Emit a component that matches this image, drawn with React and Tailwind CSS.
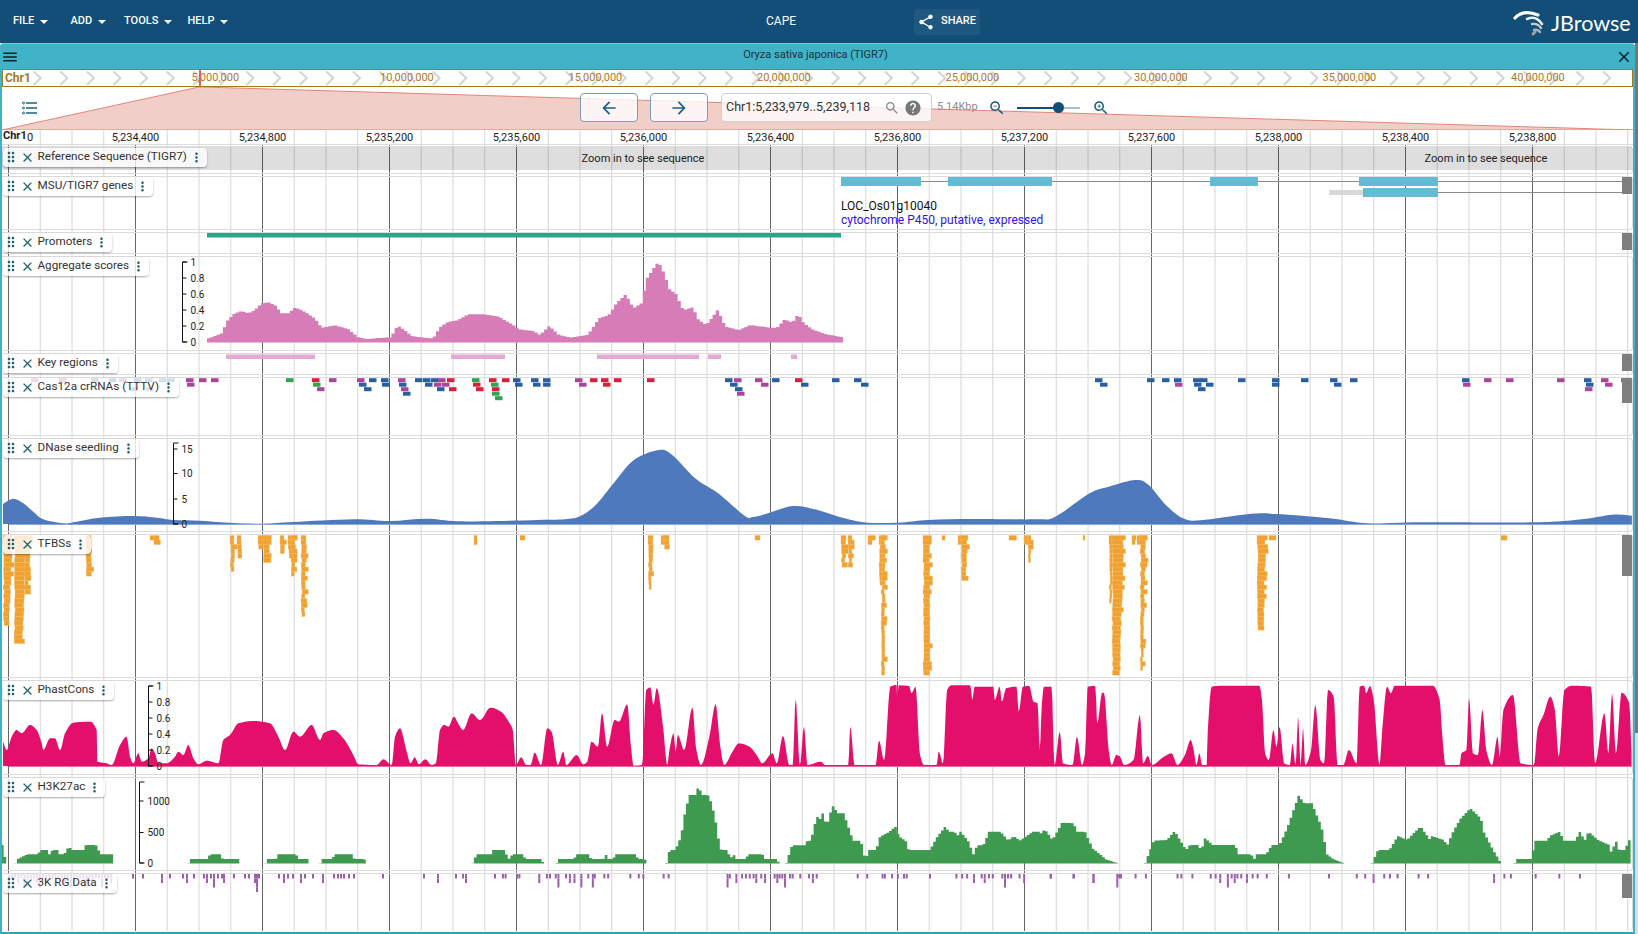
import React from "react";

const ICONS = {
  share: "M18 16.08c-.76 0-1.44.3-1.96.77L8.91 12.7c.05-.23.09-.46.09-.7s-.04-.47-.09-.7l7.05-4.11c.54.5 1.25.81 2.04.81 1.66 0 3-1.34 3-3s-1.34-3-3-3-3 1.34-3 3c0 .24.04.47.09.7L8.04 9.81C7.5 9.31 6.79 9 6 9c-1.66 0-3 1.34-3 3s1.34 3 3 3c.79 0 1.5-.31 2.04-.81l7.12 4.16c-.05.21-.08.43-.08.65 0 1.61 1.31 2.92 2.92 2.92 1.61 0 2.92-1.31 2.92-2.92s-1.31-2.92-2.92-2.92z",
  back: "M20 11H7.83l5.59-5.59L12 4l-8 8 8 8 1.41-1.41L7.83 13H20v-2z",
  forward: "M12 4l-1.41 1.41L16.17 11H4v2h12.17l-5.58 5.59L12 20l8-8z",
  close: "M19 6.41 17.59 5 12 10.59 6.41 5 5 6.41 10.59 12 5 17.59 6.41 19 12 13.41 17.59 19 19 17.59 13.41 12z",
  menu: "M3 18h18v-2H3v2zm0-5h18v-2H3v2zm0-7v2h18V6H3z",
  search: "M15.5 14h-.79l-.28-.27C15.41 12.59 16 11.11 16 9.5 16 5.91 13.09 3 9.5 3S3 5.91 3 9.5 5.91 16 9.5 16c1.61 0 3.09-.59 4.23-1.57l.27.28v.79l5 4.99L20.49 19l-4.99-5zm-6 0C7.01 14 5 11.99 5 9.5S7.01 5 9.5 5 14 7.01 14 9.5 11.99 14 9.5 14z",
  zoomOut: "M15.5 14h-.79l-.28-.27C15.41 12.59 16 11.11 16 9.5 16 5.91 13.09 3 9.5 3S3 5.91 3 9.5 5.91 16 9.5 16c1.61 0 3.09-.59 4.23-1.57l.27.28v.79l5 4.99L20.49 19l-4.99-5zm-6 0C7.01 14 5 11.99 5 9.5S7.01 5 9.5 5 14 7.01 14 9.5 11.99 14 9.5 14zM7 9h5v1H7z",
  zoomIn: "M15.5 14h-.79l-.28-.27C15.41 12.59 16 11.11 16 9.5 16 5.91 13.09 3 9.5 3S3 5.91 3 9.5 5.91 16 9.5 16c1.61 0 3.09-.59 4.23-1.57l.27.28v.79l5 4.99L20.49 19l-4.99-5zm-6 0C7.01 14 5 11.99 5 9.5S7.01 5 9.5 5 14 7.01 14 9.5 11.99 14 9.5 14zm2.5-4h-2v2H9v-2H7V9h2V7h1v2h2v1z",
  help: "M12 2C6.48 2 2 6.48 2 12s4.48 10 10 10 10-4.48 10-10S17.52 2 12 2zm1 17h-2v-2h2v2zm2.07-7.75-.9.92C13.45 12.9 13 13.5 13 15h-2v-.5c0-1.1.45-2.1 1.17-2.83l1.24-1.26c.37-.36.59-.86.59-1.41 0-1.1-.9-2-2-2s-2 .9-2 2H8c0-2.21 1.79-4 4-4s4 1.79 4 4c0 .88-.36 1.68-.93 2.25z",
  more: "M12 8c1.1 0 2-.9 2-2s-.9-2-2-2-2 .9-2 2 .9 2 2 2zm0 2c-1.1 0-2 .9-2 2s.9 2 2 2 2-.9 2-2-.9-2-2-2zm0 6c-1.1 0-2 .9-2 2s.9 2 2 2 2-.9 2-2-.9-2-2-2z",
  drag: "M11 18c0 1.1-.9 2-2 2s-2-.9-2-2 .9-2 2-2 2 .9 2 2zm-2-8c-1.1 0-2 .9-2 2s.9 2 2 2 2-.9 2-2-.9-2-2-2zm0-6c-1.1 0-2 .9-2 2s.9 2 2 2 2-.9 2-2-.9-2-2-2zm6 4c1.1 0 2-.9 2-2s-.9-2-2-2-2 .9-2 2 .9 2 2 2zm0 2c-1.1 0-2 .9-2 2s.9 2 2 2 2-.9 2-2-.9-2-2-2zm0 6c-1.1 0-2 .9-2 2s.9 2 2 2 2-.9 2-2-.9-2-2-2z",
};

function Icon({ name, className }) {
  return (
    <svg viewBox="0 0 24 24" className={className} fill="currentColor">
      <path d={ICONS[name]} />
    </svg>
  );
}

// converts points read off the zoomed crops into page coordinates
const crop = (ox, oy, sx) => (pts) => pts.map(([x, y]) => [ox + x / sx, oy + y / 3]);
const z1 = crop(0, 250, 3);
const z7 = crop(500, 250, 2.613);
const z8 = crop(1040, 370, 2.622);
const z6 = crop(0, 720, 3);
const z9 = crop(400, 530, 2.376);
const z10 = crop(1040, 670, 2.622);
const z11 = crop(500, 770, 2.613);

const area = (pts, base) =>
  `M${pts[0][0].toFixed(1)} ${base}` +
  pts.map((p) => `L${p[0].toFixed(1)} ${p[1].toFixed(1)}`).join("") +
  `L${pts[pts.length - 1][0].toFixed(1)} ${base}Z`;

const smoothArea = (pts, base) => {
  let d = `M${pts[0][0].toFixed(1)} ${base}L${pts[0][0].toFixed(1)} ${pts[0][1].toFixed(1)}`;
  for (let i = 0; i < pts.length - 1; i++) {
    const p0 = pts[Math.max(i - 1, 0)];
    const p1 = pts[i];
    const p2 = pts[i + 1];
    const p3 = pts[Math.min(i + 2, pts.length - 1)];
    d += `C${(p1[0] + (p2[0] - p0[0]) / 6).toFixed(1)} ${(p1[1] + (p2[1] - p0[1]) / 6).toFixed(1)} ${(p2[0] - (p3[0] - p1[0]) / 6).toFixed(1)} ${(p2[1] - (p3[1] - p1[1]) / 6).toFixed(1)} ${p2[0].toFixed(1)} ${p2[1].toFixed(1)}`;
  }
  return d + `L${pts[pts.length - 1][0].toFixed(1)} ${base}Z`;
};

const stepped = (pts, bin) => {
  const out = [];
  let j = 0;
  for (let x = pts[0][0]; x < pts[pts.length - 1][0]; x += bin) {
    while (j < pts.length - 2 && pts[j + 1][0] < x) j++;
    const t = (x - pts[j][0]) / (pts[j + 1][0] - pts[j][0] || 1);
    const y = pts[j][1] + (pts[j + 1][1] - pts[j][1]) * t;
    out.push([x, y], [x + bin, y]);
  }
  return out;
};

// monotone cubic through the points, so peaks come out as round domes with no overshoot
const domes = (raw, step) => {
  const pts = raw.filter((p, i) => i === 0 || p[0] > raw[i - 1][0]);
  const n = pts.length;
  const d = [];
  for (let i = 0; i < n - 1; i++) d.push((pts[i + 1][1] - pts[i][1]) / (pts[i + 1][0] - pts[i][0]));
  const m = pts.map((_, i) => {
    if (i === 0) return d[0];
    if (i === n - 1) return d[n - 2];
    return d[i - 1] * d[i] <= 0 ? 0 : (2 * d[i - 1] * d[i]) / (d[i - 1] + d[i]);
  });
  const out = [];
  for (let i = 0; i < n - 1; i++) {
    const h = pts[i + 1][0] - pts[i][0];
    for (let x = pts[i][0]; x < pts[i + 1][0]; x += step) {
      const t = (x - pts[i][0]) / h;
      const t2 = t * t;
      const t3 = t2 * t;
      out.push([
        x,
        (2 * t3 - 3 * t2 + 1) * pts[i][1] + (t3 - 2 * t2 + t) * h * m[i] + (-2 * t3 + 3 * t2) * pts[i + 1][1] + (t3 - t2) * h * m[i + 1],
      ]);
    }
  }
  return out;
};

const AGGREGATE = stepped(
  [
    ...z1([[621, 265], [640, 258], [660, 250], [680, 208], [700, 190], [720, 183], [740, 190], [760, 180], [780, 160], [800, 157], [820, 165], [840, 190], [860, 190], [880, 173], [900, 180], [920, 192], [940, 205], [960, 233], [1000, 226], [1040, 237], [1070, 262], [1100, 267], [1130, 264], [1170, 262], [1180, 235], [1195, 230], [1215, 245], [1230, 258], [1270, 263], [1295, 265], [1315, 232], [1340, 215], [1365, 212], [1400, 193], [1450, 193], [1490, 200]]),
    ...z7([[0, 205], [30, 225], [45, 238], [85, 243], [100, 255], [125, 228], [150, 255], [180, 263], [225, 255], [255, 205], [280, 195], [300, 160], [325, 133], [345, 175], [365, 160], [380, 85], [400, 50], [410, 35], [425, 70], [440, 120], [455, 130], [475, 180], [500, 172], [515, 210], [535, 225], [565, 180], [585, 230], [620, 240], [650, 225], [700, 233], [720, 233], [740, 208], [760, 218], [775, 192], [790, 220], [815, 240], [850, 253], [893, 262]]),
  ],
  3.18
);

const DNASE = [
  ...z1([[9, 762], [40, 746], [70, 760], [100, 785], [130, 808], [190, 820], [230, 815], [300, 803], [400, 798], [470, 803], [520, 810], [600, 812], [700, 819], [790, 821], [880, 816], [1060, 808], [1170, 813], [1280, 806], [1370, 814], [1490, 813]]),
  ...z7([[100, 810], [170, 808], [210, 798], [250, 765], [300, 695], [350, 630], [415, 600], [450, 615], [510, 685], [570, 730], [640, 798], [660, 801], [700, 790], [765, 768], [830, 780], [900, 805], [960, 818], [1040, 818], [1120, 810], [1240, 807], [1400, 808]]),
  ...z8([[40, 440], [130, 370], [180, 350], [250, 330], [285, 345], [330, 405], [375, 445], [420, 451], [550, 432], [620, 432], [760, 445], [860, 460], [1000, 457], [1300, 457], [1420, 448], [1500, 434], [1552, 437]]),
];

const PHAST = domes(
  [
    ...z6([[9, 65], [20, 90], [35, 50], [50, 30], [65, 40], [90, 15], [110, 30], [125, 70], [130, 90], [150, 55], [165, 55], [180, 90], [195, 40], [220, 8], [270, 5], [290, 30], [292, 125], [320, 130], [335, 135], [360, 75], [380, 50], [390, 110], [400, 130], [415, 100], [425, 125], [445, 115], [455, 85], [465, 100], [475, 130], [500, 130], [525, 110], [535, 95], [550, 105], [565, 75], [580, 115], [595, 133], [620, 122], [655, 130], [670, 60], [690, 45], [715, 10], [760, 3], [810, 10], [835, 50], [855, 90], [880, 35], [900, 50], [935, 15], [960, 60], [970, 40], [1000, 30], [1030, 55], [1060, 105], [1075, 133], [1130, 135], [1150, 118], [1175, 135], [1185, 50]]),
    ...z9([[0, 595], [15, 660], [25, 700], [35, 682], [45, 703], [60, 688], [75, 705], [85, 700], [95, 600], [105, 585], [115, 590], [128, 560], [140, 585], [150, 600], [170, 550], [190, 570], [215, 533], [240, 545], [258, 575], [268, 600], [275, 705], [288, 682], [300, 705], [310, 705], [320, 668], [335, 705], [350, 595], [360, 605], [375, 705], [388, 665], [395, 705], [420, 675], [435, 703], [445, 695], [455, 635], [470, 650], [480, 550], [492, 650], [510, 570], [520, 575], [540, 523], [548, 640], [555, 707], [575, 705], [585, 480], [595, 472], [602, 525], [610, 474], [625, 590], [635, 705], [640, 660], [650, 610], [655, 665], [660, 615], [675, 660], [695, 533], [703, 650], [715, 705], [735, 620], [750, 523], [760, 640], [770, 705], [790, 665], [805, 640], [830, 650], [850, 680], [860, 700], [885, 670], [895, 700], [910, 618], [925, 705], [933, 705], [940, 508], [950, 705], [960, 590], [968, 705], [1000, 695], [1010, 705], [1040, 705], [1065, 705], [1070, 590], [1080, 705], [1130, 705], [1138, 632], [1150, 690], [1165, 470], [1180, 465], [1181, 505], [1185, 466], [1210, 468], [1215, 490], [1225, 470], [1235, 670], [1245, 705], [1275, 705], [1280, 665], [1290, 700], [1300, 480], [1310, 466], [1355, 466], [1360, 510], [1365, 470], [1410, 470], [1413, 510], [1425, 470], [1430, 515], [1440, 475], [1465, 470], [1470, 545], [1480, 470], [1495, 468], [1505, 515], [1515, 520], [1520, 660], [1525, 525], [1530, 470], [1548, 470], [1555, 705]]),
    ...z10([[52, 185], [60, 280], [85, 285], [97, 200], [110, 285], [118, 250], [125, 50], [145, 48], [150, 160], [163, 68], [168, 70], [180, 240], [188, 285], [200, 255], [210, 260], [220, 285], [245, 270], [262, 135], [270, 280], [283, 258], [293, 285], [325, 260], [345, 250], [360, 285], [380, 255], [395, 210], [403, 240], [410, 285], [418, 250], [425, 285], [437, 285], [440, 180], [450, 50], [480, 47], [575, 47], [582, 90], [590, 250], [600, 270], [612, 180], [620, 230], [628, 170], [640, 280], [655, 285], [662, 220], [670, 285], [677, 140], [683, 285], [690, 175], [695, 285], [710, 245], [722, 105], [735, 270], [745, 280], [755, 60], [770, 80], [780, 285], [795, 285], [810, 240], [830, 280], [838, 50], [850, 47], [855, 70], [865, 48], [875, 90], [890, 285], [898, 170], [910, 50], [920, 70], [930, 47], [1030, 47], [1048, 90], [1055, 200], [1063, 285], [1100, 285], [1105, 250], [1118, 240], [1125, 85], [1135, 250], [1148, 255], [1160, 120], [1170, 240], [1185, 285], [1200, 200], [1205, 260], [1215, 120], [1240, 75], [1260, 280], [1295, 285], [1305, 175], [1320, 135], [1338, 80], [1350, 120], [1360, 260], [1375, 60], [1395, 47], [1445, 50], [1455, 280], [1480, 130], [1490, 250], [1500, 70], [1510, 250], [1525, 68], [1545, 100], [1552, 285]]),
  ],
  0.75
);

const H3K = [
  z6([[9, 375], [15, 405], [22, 430]]),
  z6([[49, 430], [55, 417], [85, 403], [115, 403], [125, 390], [145, 390], [150, 403], [160, 390], [175, 390], [180, 403], [195, 403], [210, 377], [215, 390], [252, 390], [260, 375], [290, 375], [305, 403], [340, 403], [345, 430]]),
  z6([[568, 430], [575, 417], [625, 417], [632, 403], [663, 403], [670, 417], [718, 417], [723, 430]]),
  z6([[799, 430], [805, 417], [830, 417], [835, 403], [890, 403], [900, 417], [925, 417], [930, 430]]),
  z6([[963, 430], [970, 417], [1000, 417], [1005, 403], [1058, 403], [1065, 417], [1095, 417], [1101, 430]]),
  [
    ...z6([[1420, 430], [1432, 403], [1475, 403], [1480, 390], [1500, 390]]),
    ...z11([[12, 240], [25, 267], [35, 253], [62, 253], [68, 267], [110, 267], [115, 279]]),
  ],
  z11([[150, 279], [155, 267], [195, 267], [203, 253], [232, 253], [240, 267], [272, 267], [278, 253], [285, 267], [298, 267], [303, 253], [358, 253], [362, 267], [380, 267], [385, 279]]),
  z11([[437, 279], [445, 240], [460, 240], [475, 200], [485, 130], [497, 75], [515, 75], [520, 47], [530, 75], [545, 75], [555, 100], [565, 150], [575, 220], [580, 240], [595, 240], [605, 265], [612, 253], [620, 267], [645, 267], [650, 253], [688, 253], [693, 267], [725, 267], [731, 279]]),
  [
    ...z11([[750, 279], [765, 226], [800, 226], [805, 212], [815, 212], [822, 170], [835, 130], [840, 155], [845, 130], [852, 155], [860, 155], [870, 105], [885, 130], [900, 130], [915, 180], [925, 212], [945, 212], [957, 272], [965, 240], [985, 240], [995, 200], [1020, 185], [1035, 170], [1045, 200], [1062, 212], [1070, 240], [1085, 240], [1125, 240], [1145, 200], [1165, 170], [1175, 185], [1190, 185], [1197, 198], [1205, 185], [1225, 212], [1240, 255], [1248, 226], [1265, 226], [1280, 185], [1310, 185], [1330, 212], [1345, 198], [1360, 212], [1395, 185], [1410, 185]]),
    ...z10([[0, 495], [15, 478], [35, 510], [60, 458], [90, 460], [100, 485], [120, 485], [140, 535], [175, 568], [205, 579]]),
  ],
  z10([[278, 579], [300, 512], [335, 510], [355, 483], [385, 540], [395, 525], [415, 525], [425, 540], [435, 505], [455, 525], [515, 525], [520, 553], [555, 553], [565, 567], [570, 553], [595, 553], [610, 525], [630, 525], [650, 475], [680, 377], [695, 400], [715, 400], [740, 470], [755, 553], [770, 567], [798, 579]]),
  z10([[873, 579], [888, 540], [918, 540], [940, 498], [965, 510], [985, 485], [1000, 470], [1025, 510], [1030, 498], [1060, 510], [1070, 525], [1085, 485], [1105, 445], [1130, 415], [1158, 445], [1165, 485], [1190, 540], [1210, 579]]),
  z10([[1247, 579], [1250, 567], [1290, 567], [1300, 512], [1330, 512], [1340, 497], [1365, 485], [1375, 512], [1405, 512], [1418, 485], [1430, 512], [1440, 485], [1465, 510], [1495, 525], [1500, 548], [1512, 512], [1520, 540], [1535, 540], [1552, 498], [1552, 579]]),
].map((seg) => stepped(seg, 2.6).map(([x, y]) => [x - 2, y]));

const B = "#2a5f9e";
const P = "#a9459b";
const R = "#d4213d";
const G = "#33a24f";
const CRRNA = [
  [31, 0, P], [59, 0, P], [91, 0, B], [109, 0, B], [119, 0, P], [134, 0, B], [145, 0, B], [159, 0, B], [167, 0, B], [130, 2, B], [146, 2, P],
  [186, 0, P], [187, 1, P], [199, 0, P], [211, 0, P], [286, 0, G], [312, 0, R], [313, 1, G], [317, 2, P], [329, 0, P], [357, 0, P], [359, 1, B], [364, 2, B], [369, 0, B], [381, 0, B], [382, 1, B], [398, 0, P], [399, 1, B], [401, 2, P], [403, 3, B], [415, 0, B], [423, 0, B], [431, 0, B], [425, 1, B], [434, 1, P], [438, 0, P], [442, 1, P], [437, 2, B], [447, 0, R], [449, 2, R], [472, 0, G], [473, 1, R], [476, 2, R], [489, 0, R], [491, 1, G], [492, 2, R], [492, 3, G], [495, 4, G],
  [502, 0, R], [513, 0, B], [515, 1, B], [531, 0, B], [533, 1, B], [543, 0, B], [543, 1, B], [575, 0, P], [579, 1, P], [590, 0, R], [601, 0, R], [603, 1, R], [614, 0, R], [647, 0, R], [725, 0, B], [730, 1, B], [734, 0, P], [735, 2, B], [737, 3, P], [755, 0, P], [761, 1, P], [772, 0, B], [795, 0, R], [801, 1, B], [832, 0, B], [854, 0, B], [861, 1, B],
  [1095, 0, B], [1100, 1, B], [1147, 0, B], [1162, 0, B], [1174, 0, B], [1175, 1, P], [1193, 0, B], [1194, 1, B], [1200, 0, B], [1206, 1, B], [1198, 2, B], [1238, 0, B], [1272, 0, B], [1272, 1, B], [1301, 0, B], [1330, 0, B], [1334, 1, B], [1350, 0, B], [1462, 0, B], [1463, 1, P], [1484, 0, P], [1506, 0, P], [1557, 0, P], [1584, 0, B], [1586, 1, B], [1585, 2, P], [1601, 0, P], [1605, 1, P], [1621, 0, P],
];

// repeatable jitter so the stacks look the same on every render
let seed = 7;
const rnd = () => {
  seed = (seed * 16807) % 2147483647;
  return seed / 2147483647;
};

// [left, width at top, width at bottom, rows]
const TFBS_STACKS = [
  [3, 9, 5, 20], [14, 11, 8, 24], [24, 6, 3, 13], [86, 5, 5, 9], [150, 4, 3, 1], [154, 5, 4, 2],
  [230, 4, 3, 8], [237, 4, 4, 5], [258, 9, 5, 3], [263, 6, 5, 6], [267, 4, 4, 2], [280, 4, 4, 4], [288, 6, 4, 5], [291, 4, 3, 9], [301, 5, 3, 18],
  [474, 3, 3, 2], [520, 5, 5, 1], [648, 5, 2, 12], [661, 5, 3, 2], [664, 5, 5, 3], [755, 5, 5, 1],
  [841, 5, 3, 7], [848, 4, 2, 7], [868, 5, 4, 2], [879, 6, 3, 11], [881, 3, 3, 31], [923, 6, 6, 31], [942, 3, 3, 1], [958, 6, 5, 2], [966, 2, 2, 1], [961, 6, 4, 10], [1009, 5, 5, 1], [1024, 5, 4, 2], [1028, 3, 2, 6],
  [1083, 2, 2, 1], [1109, 3, 2, 15], [1112, 11, 7, 31], [1132, 4, 3, 2], [1137, 7, 6, 2], [1140, 5, 2, 30], [1257, 8, 6, 21], [1269, 7, 7, 1], [1501, 6, 6, 1],
];
const TFBS = TFBS_STACKS.flatMap(([x, top, bottom, rows]) =>
  Array.from({ length: rows }, (_, r) => {
    const w = top + ((bottom - top) * r) / Math.max(rows - 1, 1);
    return { x: x + rnd() * 1.2 * (r > 1 ? 1 : 0), y: 535.5 + r * 4.5, w: w + (rnd() < 0.25 ? 2.5 : 0) };
  })
);

// [x, stack height]
const RG_BARS = [
  ...[[132, 1], [142, 1], [161, 2], [169, 1], [182, 1], [186, 2], [193, 1], [203, 1], [206, 2], [210, 1], [213, 3], [217, 1], [221, 1], [223, 2], [233, 1], [244, 1], [248, 1], [254, 2], [256, 4], [258, 1], [278, 1], [283, 2], [287, 1], [292, 1], [300, 2], [304, 1], [312, 1], [322, 2], [333, 1], [337, 1], [340, 1], [343, 1], [348, 1], [353, 1], [382, 1], [423, 1], [437, 2], [455, 1], [462, 1], [465, 2], [494, 1]],
  ...[5, 12, 42, 48, 120, 128, 143, 170, 228, 245, 270, 280, 338, 360, 372, 425, 438, 598, 630, 640, 650, 660, 680, 715, 728, 735, 755, 762, 782, 805, 825, 932, 957, 997, 1003, 1022, 1037, 1053, 1060, 1121, 1190, 1205, 1218, 1256, 1275, 1285, 1310, 1325, 1333, 1355, 1437, 1497].map((x) => [500 + x / 2.613, 1]),
  ...[[100, 2], [150, 3], [180, 2], [192, 2], [210, 3], [240, 3], [592, 3], [615, 2], [667, 2], [690, 2], [722, 2], [742, 3], [815, 2], [1236, 2], [1264, 2], [1317, 3], [1367, 2], [1548, 2]].map(([x, n]) => [500 + x / 2.613, n]),
  ...[25, 85, 248, 275, 358, 368, 397, 445, 458, 500, 515, 525, 555, 568, 592, 650, 755, 828, 850, 900, 915, 935, 990, 1015, 1215, 1232, 1297, 1359, 1413].map((x) => [1040 + x / 2.622, 1]),
  ...[[138, 2], [200, 3], [470, 2], [490, 3], [508, 2], [540, 2], [872, 2], [1188, 2], [205, 1], [210, 1]].map(([x, n]) => [1040 + x / 2.622, n]),
  ...Array.from({ length: 34 }, (_, i) => [8 + i * 3.1, i % 5 === 0 ? 3 : i % 3 === 0 ? 2 : 1]),
];

const MAJORS = Array.from({ length: 13 }, (_, i) => 8.5 + 127 * i);
const MINORS = Array.from({ length: 52 }, (_, i) => 8.5 + 31.75 * i).filter((_, i) => i % 4 !== 0);
const SCALE_LABELS = ["", "5,234,400", "5,234,800", "5,235,200", "5,235,600", "5,236,000", "5,236,400", "5,236,800", "5,237,200", "5,237,600", "5,238,000", "5,238,400", "5,238,800"];
const OVERVIEW_LABELS = ["5,000,000", "10,000,000", "15,000,000", "20,000,000", "25,000,000", "30,000,000", "35,000,000", "40,000,000"];

function Axis({ x, top, bottom, ticks }) {
  return (
    <g>
      <path d={`M${x + 5} ${top}H${x}V${bottom}H${x + 5}`} fill="none" stroke="#111" strokeWidth="1" />
      {ticks.map(([label, y]) => (
        <g key={label}>
          <path d={`M${x} ${y}h4`} stroke="#111" strokeWidth="1" />
          <text x={x + 8} y={y + 3.5} fontSize="10" fill="#222">
            {label}
          </text>
        </g>
      ))}
    </g>
  );
}

function TrackLabel({ name, className = "top-0" }) {
  return (
    <div className={`absolute left-[1px] flex h-[19px] items-center rounded-[4px] bg-white/80 pb-[1px] text-[11.7px] whitespace-nowrap text-[#333] shadow-[0_1px_2px_rgba(0,0,0,0.35)] ${className}`}>
      <Icon name="drag" className="h-[16px] w-[16px] text-[#1f5f70]" />
      <Icon name="close" className="ml-[1px] h-[15px] w-[15px] text-[#1f5f70]" />
      <span className="ml-[2.5px]">{name}</span>
      <Icon name="more" className="mr-[3px] ml-[2px] h-[15px] w-[15px] text-[#1f5f70]" />
    </div>
  );
}

function Track({ name, top, h, className, labelClass, thumbClass, children }) {
  return (
    <div className={`relative mb-[2px] rounded-r-[4px] border-y border-r border-[#dcdcdc] ${className}`}>
      <svg className="block h-full w-[1630px]" viewBox={`2 ${top + 1} 1630 ${h - 2}`}>
        {children}
      </svg>
      <TrackLabel name={name} className={labelClass} />
      {thumbClass && <div className={`absolute top-0 right-0 w-[10px] bg-[#7f7f7f] ${thumbClass}`} />}
    </div>
  );
}

function MenuItem({ label, className }) {
  return (
    <div className={`flex items-center gap-[6px] ${className}`}>
      {label}
      <span className="mt-[1px] border-x-[4px] border-t-[4px] border-x-transparent border-t-white" />
    </div>
  );
}

export default function App() {
  return (
    <div className="flex h-[934px] w-[1638px] flex-col overflow-hidden bg-white font-['Roboto',sans-serif]">
      {/* app bar */}
      <header className="flex h-[43px] items-center bg-[#124e78] text-[11px] font-medium text-white">
        <nav className="flex w-[766px] pl-[13px]">
          <MenuItem label="FILE" className="w-[57.5px]" />
          <MenuItem label="ADD" className="w-[53.5px]" />
          <MenuItem label="TOOLS" className="w-[63.5px]" />
          <MenuItem label="HELP" />
        </nav>
        <div className="-mt-[1px] w-[148px] text-[12px] font-normal">CAPE</div>
        <div className="flex h-[26px] w-[66px] items-center gap-[6px] rounded-[4px] bg-white/5 pl-[3px]">
          <Icon name="share" className="h-[18px] w-[18px]" />
          SHARE
        </div>
        <div className="relative ml-auto h-[43px] w-[130px]">
          <svg className="absolute top-0 left-0 h-[43px] w-[50px]" viewBox="1508 0 50 43" fill="none" strokeLinecap="round">
            <path d="M1515 18Q1523 9 1538 15" stroke="#fff" strokeWidth="3.2" />
            <path d="M1527 19Q1536 15 1542 24" stroke="#eef0f2" strokeWidth="2.6" />
            <path d="M1532 24Q1538 23 1541 28" stroke="#c4cad0" strokeWidth="2.4" />
            <path d="M1534 30Q1538 29 1540 32" stroke="#aab2ba" strokeWidth="2.4" />
            <path d="M1533 34L1535 32" stroke="#9aa2aa" strokeWidth="3" />
          </svg>
          <span className="absolute top-[7px] left-[43px] font-['Lato',sans-serif] text-[21.5px] font-normal text-white">JBrowse</span>
        </div>
      </header>

      <div className="flex flex-1">
        <main className="relative flex w-[1635px] flex-col rounded-t-[4px] border-x-2 border-b-2 border-[#3fb1c8] border-b-[#3a9fb3]">
          {/* view title */}
          <div className="-mx-[2px] flex h-[26px] items-center rounded-t-[4px] border-t border-[#9fb8c4] bg-[#41b3c9] pr-[2px] pl-[1px] text-[#1d2f3a]">
            <Icon name="menu" className="h-[18px] w-[18px] text-[#10202a]" />
            <div className="-mt-[2px] flex-1 pr-[3px] text-center text-[11px]">Oryza sativa japonica (TIGR7)</div>
            <Icon name="close" className="h-[18px] w-[18px] text-[#10202a]" />
          </div>

          {/* chromosome overview */}
          <div className="relative h-[18px] border border-[#a6761f] bg-white">
            <svg className="block h-[16px] w-[1629px]" viewBox="3 70 1629 16" fill="none">
              {Array.from({ length: 60 }, (_, i) => (
                <path key={i} d={`M${33.7 + i * 26.6} 71.5l7 6.5-7 7`} stroke="#d4d4d4" strokeWidth="2" />
              ))}
              <text x="5" y="81.5" fontSize="12" fontWeight="700" fill="#a6761f">Chr1</text>
              {OVERVIEW_LABELS.map((label, i) => (
                <text key={label} x={191.5 + 188.5 * i} y="80.5" fontSize="11" fill="#ab7a2a">
                  {label}
                </text>
              ))}
            </svg>
            <div className="absolute top-0 left-[196px] h-[17px] w-[2px] bg-[#d9655b]" />
          </div>

          {/* controls, over the zoom polygon */}
          <div className="relative flex h-[43px] items-center pb-[2px]">
            <svg className="absolute top-0 left-0 h-[43px] w-[1631px]" viewBox="2 87 1631 43">
              <path d="M2 130L199 87H201L1633 130Z" fill="#f2cec9" stroke="#e0877b" strokeWidth="1" />
            </svg>
            <svg className="relative ml-[19px] h-[18px] w-[18px] text-[#1f5f7a]" viewBox="0 0 18 18" fill="none" stroke="currentColor">
              <circle cx="2.5" cy="4" r="1" />
              <circle cx="2.5" cy="9" r="1" />
              <circle cx="2.5" cy="14" r="1" />
              <path d="M5 4h11M5 9h11M5 14h11" strokeWidth="1.5" />
            </svg>
            <button className="relative ml-[541px] flex h-[29px] w-[58px] items-center justify-center rounded-[4px] border border-[#7c9db8] bg-white/80 text-[#1f5f8a]">
              <Icon name="back" className="h-[20px] w-[20px]" />
            </button>
            <button className="relative ml-[12px] flex h-[29px] w-[58px] items-center justify-center rounded-[4px] border border-[#7c9db8] bg-white/80 text-[#1f5f8a]">
              <Icon name="forward" className="h-[20px] w-[20px]" />
            </button>
            <div className="relative ml-[13px] flex h-[29px] w-[211px] items-center rounded-[4px] border border-[#cfcfcf] bg-white/80 pl-[4px] text-[12.5px] text-[#333]">
              <span>Chr1:5,233,979..5,239,118</span>
              <Icon name="search" className="absolute left-[162px] h-[16px] w-[16px] text-[#8a8a8a]" />
              <Icon name="help" className="absolute left-[182px] h-[18px] w-[18px] text-[#777]" />
            </div>
            <span className="relative ml-[5px] text-[11px] text-[#8c8c8c]">5.14Kbp</span>
            <Icon name="zoomOut" className="relative ml-[10px] h-[18px] w-[18px] text-[#1f5f7a]" />
            <div className="relative ml-[11px] flex h-[11px] w-[63px] items-center">
              <div className="h-[2px] w-full bg-[#a8c0d2]" />
              <div className="absolute left-0 h-[2px] w-[41px] bg-[#124e78]" />
              <div className="absolute left-[36px] h-[11px] w-[11px] rounded-full bg-[#124e78]" />
            </div>
            <Icon name="zoomIn" className="relative ml-[12px] h-[18px] w-[18px] text-[#1f5f7a]" />
          </div>

          {/* tracks area */}
          <div className="relative flex-1">
            <svg className="absolute top-0 left-0 h-[801px] w-[1631px]" viewBox="2 130 1631 801">
              {MINORS.map((x) => (
                <path key={x} d={`M${x} 130V931`} stroke="#d6d6d6" strokeWidth="1" />
              ))}
              {MAJORS.map((x) => (
                <path key={x} d={`M${x} 144V931`} stroke="#666" strokeWidth="1" />
              ))}
            </svg>

            <div className="relative mb-[1px] h-[15px] overflow-hidden border-b border-[#dcdcdc]">
              <svg className="block h-[14px] w-[1631px]" viewBox="2 130 1631 14" fontSize="11" fill="#222">
                <text x="27" y="140.5">0</text>
                {SCALE_LABELS.map((label, i) => (
                  <text key={i} x={MAJORS[i]} y="140.5" textAnchor="middle">
                    {label}
                  </text>
                ))}
              </svg>
              <div className="absolute top-[-1px] left-[1px] h-[14px] text-[11px] leading-[14px] font-bold text-[#222]">Chr1</div>
            </div>

            <Track name="Reference Sequence (TIGR7)" top={146} h={28} className="h-[28px]" labelClass="top-[1px]">
              <rect x="2" y="147" width="1630" height="23" fill="#000" fillOpacity="0.13" />
              <text x="643" y="162" fontSize="11" fill="#222" textAnchor="middle">Zoom in to see sequence</text>
              <text x="1486" y="162" fontSize="11" fill="#222" textAnchor="middle">Zoom in to see sequence</text>
            </Track>

            <Track name="MSU/TIGR7 genes" top={176} h={54} className="h-[54px]" thumbClass="h-[17px]">
              <path d="M841 181.5H1632" stroke="#8a8a8a" strokeWidth="1" />
              <path d="M1438 192.5H1632" stroke="#8a8a8a" strokeWidth="1" />
              <rect x="1329" y="190" width="34" height="5" fill="#d8d8d8" />
              {[[841, 80], [948, 104], [1210, 48], [1359, 79]].map(([x, w]) => (
                <rect key={x} x={x} y="177" width={w} height="9" fill="#64bbd5" />
              ))}
              <rect x="1363" y="188" width="75" height="9" fill="#64bbd5" />
              <text x="841" y="210" fontSize="12" fill="#111">LOC_Os01g10040</text>
              <text x="841" y="224" fontSize="12" fill="#2f10f0">cytochrome P450, putative, expressed</text>
            </Track>

            <Track name="Promoters" top={232} h={22} className="h-[22px]" thumbClass="h-[17px]">
              <rect x="207" y="233" width="634" height="4.5" fill="#2aa58c" />
            </Track>

            <Track name="Aggregate scores" top={256} h={95} className="h-[95px]">
              <path d={area(AGGREGATE, 342.5)} fill="#d67db7" />
              <Axis x={182.5} top={262} bottom={342} ticks={[["1", 262], ["0.8", 278], ["0.6", 294], ["0.4", 310], ["0.2", 326], ["0", 342]]} />
            </Track>

            <Track name="Key regions" top={353} h={22} className="h-[22px]" thumbClass="h-[17px]">
              {[[226, 89], [451, 54], [597, 102], [708, 13], [791, 6]].map(([x, w]) => (
                <rect key={x} x={x} y="354.5" width={w} height="4.5" fill="#e6a9d2" />
              ))}
            </Track>

            <Track name="Cas12a crRNAs (TTTV)" top={377} h={59} className="h-[59px]" thumbClass="h-[25px]">
              {CRRNA.map(([x, row, color], i) => (
                <rect key={i} x={x} y={378.2 + row * 4.5} width="7.5" height="4" fill={color} />
              ))}
            </Track>

            <Track name="DNase seedling" top={438} h={94} className="h-[94px]">
              <path d={smoothArea(DNASE, 524)} fill="#4e79bc" />
              <path d="M9 524.5H1632" stroke="#8aa8d6" strokeWidth="1" />
              <Axis x={173.5} top={443} bottom={524} ticks={[["15", 449], ["10", 473.5], ["5", 499], ["0", 524]]} />
            </Track>

            <Track name="TFBSs" top={534} h={144} className="h-[144px]" thumbClass="h-[41px]">
              {TFBS.map((f, i) => (
                <rect key={i} x={f.x} y={f.y} width={f.w} height="4.6" fill="#f0a12f" stroke="#f3bd70" strokeWidth="0.4" />
              ))}
            </Track>

            <Track name="PhastCons" top={680} h={95} className="h-[95px]">
              <path d={area(PHAST, 766)} fill="#e40f6b" />
              <path d="M9 766.5H1632" stroke="#ec6aa2" strokeWidth="1" />
              <Axis x={148.5} top={686} bottom={766} ticks={[["1", 686], ["0.8", 702], ["0.6", 718], ["0.4", 734], ["0.2", 750], ["0", 766]]} />
            </Track>

            <Track name="H3K27ac" top={777} h={94} className="h-[94px]">
              {H3K.map((seg, i) => (
                <path key={i} d={area(seg, 863.5)} fill="#3d9a4f" />
              ))}
              <Axis x={139.5} top={782} bottom={863} ticks={[["1000", 801], ["500", 832.5], ["0", 863]]} />
            </Track>

            <div className="relative h-[58px] rounded-r-[4px] border-t border-r border-[#dcdcdc]">
              <svg className="block h-[57px] w-[1630px]" viewBox="2 874 1630 57">
                {RG_BARS.flatMap(([x, n], i) =>
                  Array.from({ length: n }, (_, r) => (
                    <rect key={`${i}-${r}`} x={x} y={874 + r * 4.5} width="2" height="4.5" fill="#9a5fa8" />
                  ))
                )}
              </svg>
              <TrackLabel name="3K RG Data" />
              <div className="absolute top-0 right-0 h-[24px] w-[10px] bg-[#7f7f7f]" />
            </div>
          </div>
        </main>

        {/* page scrollbar */}
        <div className="w-[3px] bg-[#dcdcdc]">
          <div className="h-[690px] bg-[#777]" />
        </div>
      </div>
    </div>
  );
}
